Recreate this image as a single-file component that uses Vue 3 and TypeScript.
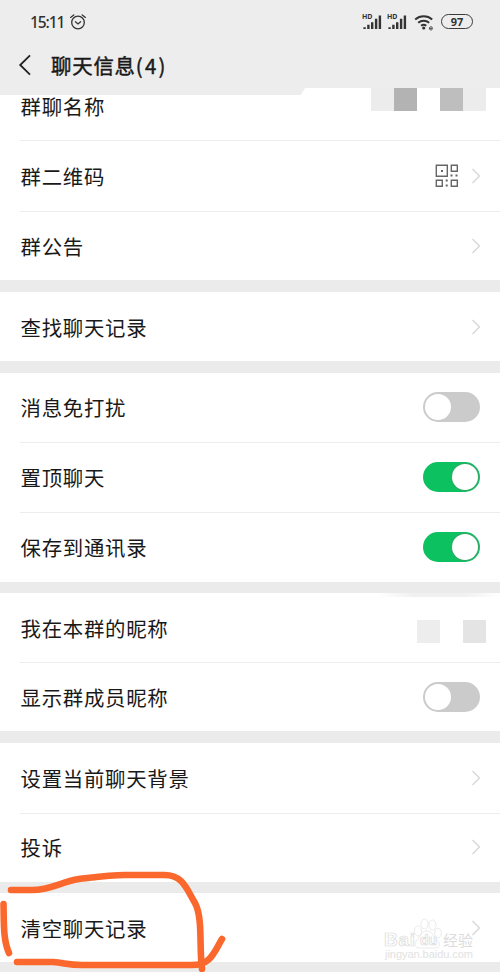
<script setup lang="ts">
interface Row {
  label: string
  height: number
  kind: 'arrow' | 'code' | 'toggle' | 'mosaic' | 'top'
  on?: boolean
}

const groups: Row[][] = [
  [
    { label: '群聊名称', height: 45, kind: 'top' },
    { label: '群二维码', height: 71, kind: 'code' },
    { label: '群公告', height: 69, kind: 'arrow' },
  ],
  [{ label: '查找聊天记录', height: 69, kind: 'arrow' }],
  [
    { label: '消息免打扰', height: 69, kind: 'toggle', on: false },
    { label: '置顶聊天', height: 70, kind: 'toggle', on: true },
    { label: '保存到通讯录', height: 70, kind: 'toggle', on: true },
  ],
  [
    { label: '我在本群的昵称', height: 69, kind: 'mosaic' },
    { label: '显示群成员昵称', height: 69, kind: 'toggle', on: false },
  ],
  [
    { label: '设置当前聊天背景', height: 70, kind: 'arrow' },
    { label: '投诉', height: 69, kind: 'arrow' },
  ],
  [{ label: '清空聊天记录', height: 69, kind: 'arrow' }],
]
</script>

<template>
  <main class="screen">
    <header class="header">
      <div class="status">
        <span class="time">15:11</span>
        <svg class="alarm" width="18" height="18" viewBox="0 0 18 18">
          <circle cx="9" cy="9.5" r="6.3" />
          <path d="M1.6 4.4 4.8 1.9M16.4 4.4 13.2 1.9M6.4 8.8 9 11l2.6-2.2" />
        </svg>
        <svg v-for="n in 2" :key="n" class="signal" width="25" height="18" viewBox="0 0 25 18">
          <text x="0" y="6.4">HD</text>
          <path d="M2.6 14.2v1.8M6.4 11.8V16M10.2 9.2V16M14.1 5.7V16M17.9 2.5V16" />
        </svg>
        <svg class="wifi" width="22" height="18" viewBox="0 0 22 18">
          <path d="M1.2 6.4a13 13 0 0 1 17 0M4.2 9.8a8.6 8.6 0 0 1 11 0M7.1 12.8a4.1 4.1 0 0 1 5.2 0" />
          <circle cx="9.7" cy="15" r="1.6" />
          <path class="tiny" d="M15.4 15.4h3.1c0-2.2-3.1-2.2-3.1 0 0 1.9 2.3 1.8 3 1" />
        </svg>
        <span class="battery">97</span>
      </div>
      <div class="nav">
        <svg class="back" width="13" height="22" viewBox="0 0 13 22">
          <path d="M12 1.3 2.2 11l9.8 9.7" />
        </svg>
        <h1>聊天信息<span class="count">(4)</span></h1>
      </div>
      <i class="header-notch"></i>
      <div class="name-mosaic"><i></i><i></i><i></i><i></i><i></i></div>
    </header>

    <section v-for="(group, g) in groups" :key="g" class="group" :class="{ smudged: g === 3 }">
      <div
        v-for="row in group"
        :key="row.label"
        class="row"
        :class="row.kind"
        :style="{ height: row.height + 'px' }"
      >
        <span class="label">{{ row.label }}</span>
        <svg v-if="row.kind === 'code'" class="qr" width="24" height="24" viewBox="0 0 24 24">
          <path d="M1.3 1.3h11v11h-11zM16.3 1.3h6v6h-6zM1.3 16.3h6v6h-6zM16.3 16.3h6v6h-6z" />
          <path class="dots" d="M6 6h2v2H6zM15.5 10.5h2v2h-2zM20.5 10.5h2v2h-2zM10.7 15.5h2v2h-2zM10.7 20.5h2v2h-2z" />
        </svg>
        <svg v-if="row.kind === 'arrow' || row.kind === 'code'" class="chevron" width="10" height="16" viewBox="0 0 10 16">
          <path d="m1.5 1 7 7-7 7" />
        </svg>
        <span v-if="row.kind === 'toggle'" class="switch" :class="{ on: row.on }"><i></i></span>
        <span v-if="row.kind === 'mosaic'" class="nick-mosaic"><i></i><i></i></span>
      </div>
    </section>

    <svg class="watermark" width="96" height="46" viewBox="0 0 96 46">
      <g class="paw">
        <ellipse cx="34" cy="14" rx="3.6" ry="5" />
        <ellipse cx="40.5" cy="7" rx="3.6" ry="5" />
        <ellipse cx="48.5" cy="8" rx="3.6" ry="5" />
        <ellipse cx="54" cy="16" rx="3.4" ry="4.8" />
        <path d="M43 14c-5 0-6 5-10 9-4 4-2 8 3 8h15c5 0 6-4 2-8-4-4-5-9-10-9z" />
      </g>
      <text class="brand" x="0" y="29" textLength="31">Bai</text>
      <text class="brand du" x="36" y="28">du</text>
      <text class="brand cn" x="59" y="29" textLength="30">经验</text>
      <text class="domain" x="1" y="41" textLength="88">jingyan.baidu.com</text>
    </svg>

    <svg class="marker" width="230" height="104" viewBox="0 868 230 104">
      <path d="M11 890H32C51 890 60 882 79 879C96 877 109 875 125 875H163C183 874 187 890 195 903C203 918 199 946 202 969" />
      <path d="M3.5 904C4 923 3 940 9 953" />
      <path d="M17 962H53C65 963 68 965 82 965H190C211 966 214 952 222 939" />
    </svg>
  </main>
</template>

<style>
body {
  margin: 0;
}
</style>

<style scoped>
.screen {
  position: relative;
  width: 500px;
  height: 972px;
  overflow: hidden;
  background: #ebebeb;
  color: #191919;
  font-family: 'Noto Sans CJK SC', sans-serif;
}
.header {
  position: relative;
  height: 95px;
  background: #ededed;
}
.status {
  display: flex;
  align-items: center;
  height: 43px;
  padding-left: 30px;
}
.time {
  width: 39px;
  font: 500 15.5px/20px 'Noto Sans', sans-serif;
  letter-spacing: -1.1px;
  color: #303030;
}
.alarm {
  margin-right: 275px;
  fill: none;
  stroke: #333;
  stroke-width: 1.3;
  stroke-linecap: round;
}
.signal {
  flex: none;
  fill: #333;
}
.signal text {
  font: 700 7px 'Noto Sans', sans-serif;
}
.signal path {
  stroke: #333;
  stroke-width: 2.4;
}
.wifi {
  flex: none;
  margin-left: 2px;
  fill: none;
  stroke: #333;
  stroke-width: 2;
}
.wifi circle {
  fill: #333;
  stroke: none;
}
.wifi .tiny {
  stroke-width: 0.9;
}
.battery {
  box-sizing: border-box;
  width: 32px;
  height: 15px;
  margin-left: 5px;
  border: 1.6px solid #3b3b3b;
  border-radius: 8px;
  font: 700 11px/13px 'Noto Sans', sans-serif;
  color: #333;
  text-align: center;
}
.nav {
  display: flex;
  align-items: center;
  height: 44px;
  padding-left: 18px;
}
.back {
  margin-right: 20px;
  fill: none;
  stroke: #222;
  stroke-width: 1.8;
}
h1 {
  margin: 0;
  font-size: 20.4px;
  font-weight: 400;
  line-height: 30px;
  letter-spacing: 0.8px;
  -webkit-text-stroke: 0.45px #191919;
}
.count {
  letter-spacing: 2.3px;
}
.header-notch {
  position: absolute;
  top: 88px;
  right: 0;
  width: 199px;
  height: 7px;
  background: #fff;
  clip-path: polygon(4px 0, 100% 0, 100% 100%, 0 100%);
}
.name-mosaic {
  position: absolute;
  top: 88px;
  left: 371px;
  display: flex;
}
.name-mosaic i {
  width: 23px;
  height: 23px;
  background: #ececec;
}
.name-mosaic i:nth-child(2) {
  background: #b3b3b3;
}
.name-mosaic i:nth-child(3) {
  background: #fff;
}
.name-mosaic i:nth-child(4) {
  background: #bebebe;
}
.group {
  margin-bottom: 11.6px;
  background: #fff;
}
.group:first-of-type {
  margin-bottom: 12px;
}
.row {
  display: flex;
  align-items: center;
  box-sizing: border-box;
  position: relative;
  padding: 0 20px 0 20.5px;
}
.row + .row::before {
  content: '';
  position: absolute;
  top: 0;
  left: 20px;
  right: 0;
  height: 1px;
  background: #ededed;
}
.label {
  flex: 1;
  font-size: 20.4px;
  line-height: 30px;
  letter-spacing: 0.75px;
}
.top {
  align-items: flex-start;
}
.top .label {
  margin-top: -4px;
}
.qr {
  margin-right: 12px;
  fill: none;
  stroke: #666;
  stroke-width: 1.4;
}
.qr .dots {
  fill: #666;
  stroke: none;
}
.chevron {
  margin-right: -1px;
  fill: none;
  stroke: #d6d6d6;
  stroke-width: 1.3;
}
.switch {
  box-sizing: border-box;
  display: flex;
  width: 57px;
  height: 30px;
  padding: 2px;
  border-radius: 15px;
  background: #cbcbcb;
}
.switch i {
  width: 26px;
  height: 26px;
  border-radius: 50%;
  background: #fff;
}
.switch.on {
  justify-content: flex-end;
  background: #0bc160;
}
.switch.on i {
  box-shadow: 0 0 0 1px #35a568;
}
.nick-mosaic {
  display: flex;
  gap: 23px;
  margin: 8px -6px 0 0;
}
.nick-mosaic i {
  width: 23px;
  height: 23px;
  background: #ededed;
}
.nick-mosaic i + i {
  background: #e4e4e4;
}
.smudged {
  position: relative;
}
.smudged::before {
  content: '';
  position: absolute;
  top: 0;
  right: 0;
  width: 122px;
  height: 4px;
  background: linear-gradient(90deg, #fff, #f0f0f0 30%, #f0f0f0 70%, #fff);
}
.watermark {
  position: absolute;
  left: 384px;
  top: 917px;
}
.paw {
  fill: #fff;
  stroke: #e4e4e4;
  stroke-width: 0.8;
}
.brand {
  font: 700 19px 'Liberation Sans', 'Noto Sans CJK SC', sans-serif;
  fill: #fff;
  stroke: #d9d9d9;
  stroke-width: 0.7;
}
.brand.du {
  font-size: 14px;
}
.brand.cn {
  font-size: 15px;
  font-weight: 400;
  fill: #dcdcdc;
  stroke: none;
}
.domain {
  font: 11px 'Liberation Sans', sans-serif;
  fill: #e2e2e2;
}
.marker {
  position: absolute;
  left: 0;
  top: 868px;
  fill: none;
  stroke: #fa682d;
  stroke-width: 6.6;
  stroke-linecap: round;
  stroke-linejoin: round;
}
</style>
